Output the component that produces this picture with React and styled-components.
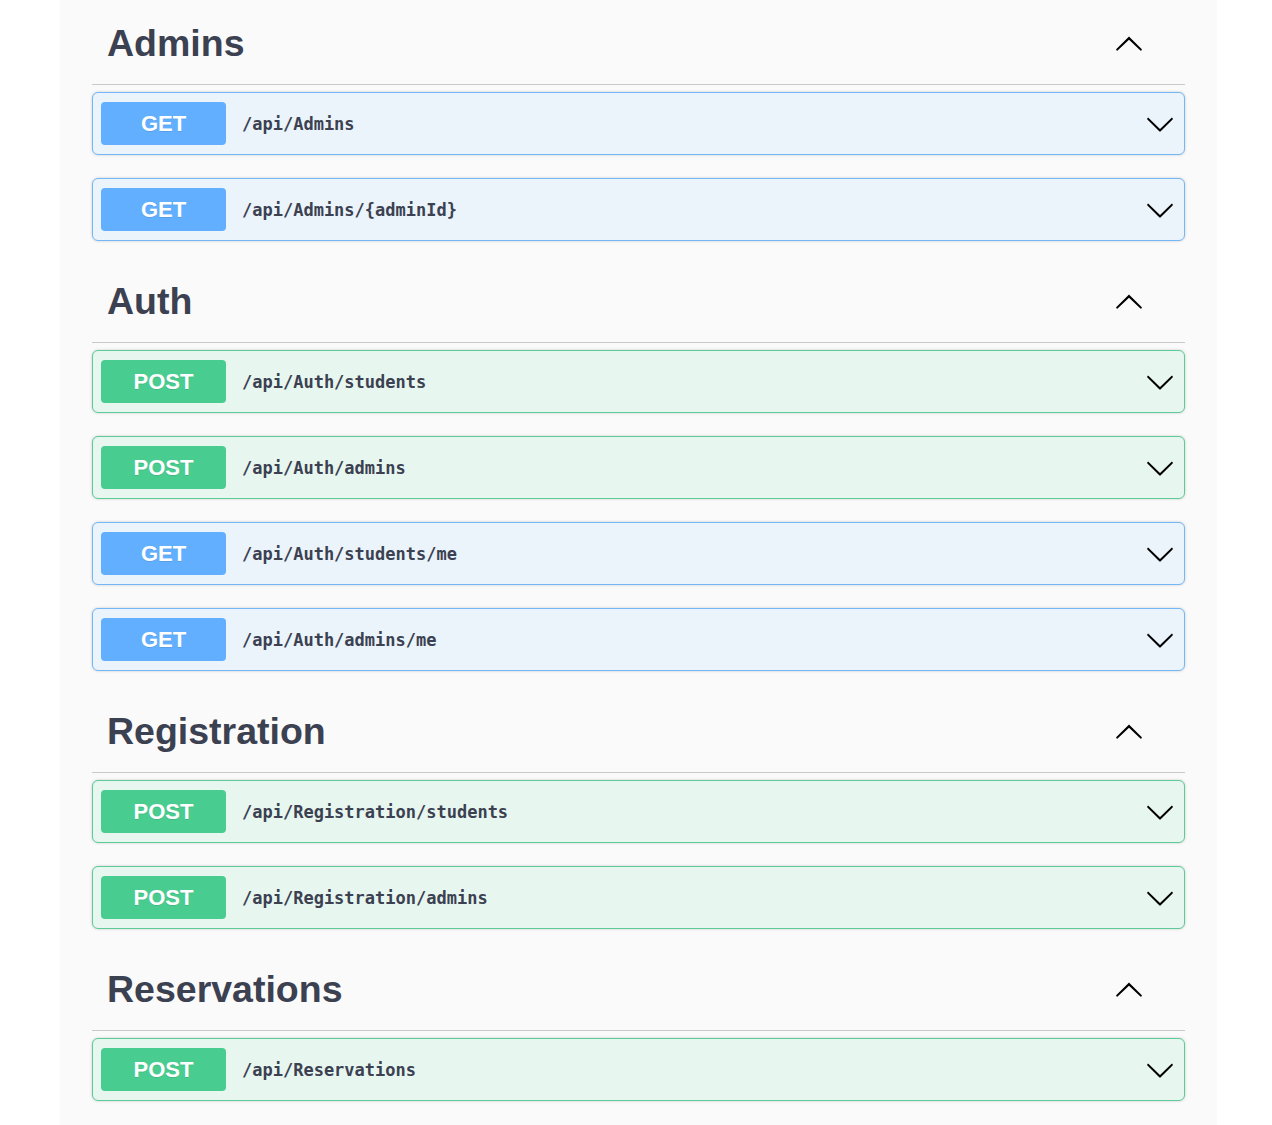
import styled, { createGlobalStyle } from 'styled-components';

const GlobalStyle = createGlobalStyle`
  html, body {
    margin: 0;
    padding: 0;
    background: #ffffff;
  }
  * { box-sizing: border-box; }
`;

const methodColors = {
  GET: { main: '#61affe', border: '#74b7f6', bg: '#ebf3fb' },
  POST: { main: '#49cc90', border: '#5ccb98', bg: '#e8f6f0' },
};

const Page = styled.div`
  width: 1157px;
  margin-left: 60px;
  background: #fafafa;
  padding: 6px 32px 0;
  min-height: 1125px;
  font-family: "Liberation Sans", Arial, sans-serif;
  color: #3b4151;
`;

const Section = styled.section``;

const TagHeader = styled.div`
  display: flex;
  align-items: center;
  justify-content: space-between;
  height: 79px;
  padding: 0 41px 4px 15px;
  border-bottom: 1px solid #c8c9cd;
  margin-bottom: 7px;
`;

const TagTitle = styled.h3`
  margin: 0;
  font-size: 37.5px;
  font-weight: 700;
  color: #3b4151;
`;

const Block = styled.div`
  display: flex;
  align-items: center;
  height: 63px;
  padding: 0 9px 0 8px;
  margin-bottom: 23px;
  border: 1px solid ${({ $method }) => methodColors[$method].border};
  background: ${({ $method }) => methodColors[$method].bg};
  border-radius: 6px;
  box-shadow: 0 0 3px rgba(0, 0, 0, 0.19);
`;

const Badge = styled.span`
  display: flex;
  align-items: center;
  justify-content: center;
  width: 125px;
  height: 43px;
  border-radius: 4px;
  background: ${({ $method }) => methodColors[$method].main};
  color: #fff;
  font-size: 22px;
  font-weight: 700;
  text-shadow: 0 1px 0 rgba(0, 0, 0, 0.1);
`;

const Path = styled.span`
  flex: 1;
  padding-left: 16px;
  font-family: "DejaVu Sans Mono", "Liberation Mono", monospace;
  font-size: 17px;
  font-weight: 700;
  color: #3b4151;
`;

const Arrow = styled.svg`
  width: 30px;
  height: 30px;
  flex-shrink: 0;
  fill: #000;
`;

const ArrowUp = () => (
  <Arrow viewBox="0 0 20 20">
    <path d="M17.418 14.908c.272.268.709.268.979 0s.271-.701 0-.969l-7.908-7.83c-.27-.268-.707-.268-.979 0l-7.908 7.83c-.27.268-.27.701 0 .969.271.268.709.268.979 0L10 7.767l7.418 7.141z" />
  </Arrow>
);

const ArrowDown = () => (
  <Arrow viewBox="0 0 20 20">
    <path d="M17.418 6.109c.272-.268.709-.268.979 0s.271.701 0 .969l-7.908 7.83c-.27.268-.707.268-.979 0l-7.908-7.83c-.27-.268-.27-.701 0-.969.271-.268.709-.268.979 0L10 13.25l7.418-7.141z" />
  </Arrow>
);

const tags = [
  {
    name: 'Admins',
    ops: [
      ['GET', '/api/Admins'],
      ['GET', '/api/Admins/{adminId}'],
    ],
  },
  {
    name: 'Auth',
    ops: [
      ['POST', '/api/Auth/students'],
      ['POST', '/api/Auth/admins'],
      ['GET', '/api/Auth/students/me'],
      ['GET', '/api/Auth/admins/me'],
    ],
  },
  {
    name: 'Registration',
    ops: [
      ['POST', '/api/Registration/students'],
      ['POST', '/api/Registration/admins'],
    ],
  },
  {
    name: 'Reservations',
    ops: [['POST', '/api/Reservations']],
  },
];

const App = () => (
  <>
    <GlobalStyle />
    <Page>
      {tags.map((tag) => (
        <Section key={tag.name}>
          <TagHeader>
            <TagTitle>{tag.name}</TagTitle>
            <ArrowUp />
          </TagHeader>
          {tag.ops.map(([method, path]) => (
            <Block key={path} $method={method}>
              <Badge $method={method}>{method}</Badge>
              <Path>{path}</Path>
              <ArrowDown />
            </Block>
          ))}
        </Section>
      ))}
    </Page>
  </>
);

export default App;
